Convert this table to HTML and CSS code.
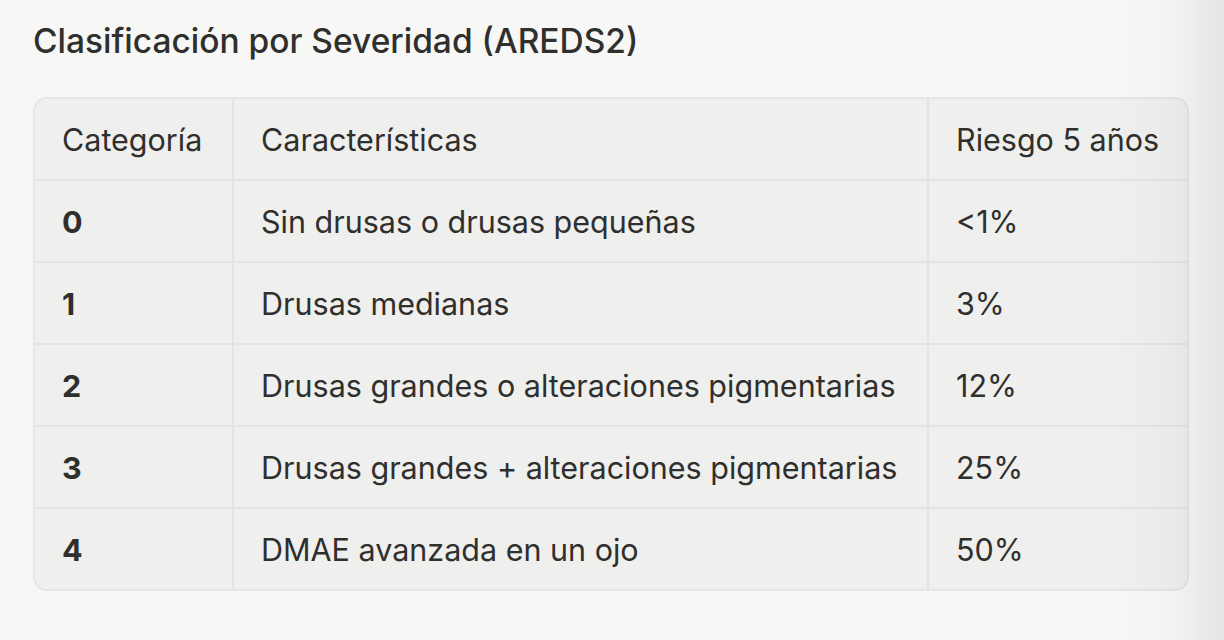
FILE: index.html
```html
<!DOCTYPE html>
<html lang="es">
<head>
<meta charset="utf-8">
<link rel="stylesheet" href="styles.css">
</head>
<body>
<main class="page">
  <h2 class="title">Clasificación por Severidad (AREDS2)</h2>
  <div class="table-wrap">
    <table class="grid">
      <colgroup>
        <col class="c1"><col class="c2"><col class="c3">
      </colgroup>
      <thead>
        <tr><th>Categoría</th><th>Características</th><th>Riesgo 5 años</th></tr>
      </thead>
      <tbody>
        <tr><td class="num">0</td><td>Sin drusas o drusas pequeñas</td><td>&lt;1%</td></tr>
        <tr><td class="num">1</td><td>Drusas medianas</td><td>3%</td></tr>
        <tr><td class="num">2</td><td>Drusas grandes o alteraciones pigmentarias</td><td>12%</td></tr>
        <tr><td class="num">3</td><td>Drusas grandes + alteraciones pigmentarias</td><td>25%</td></tr>
        <tr><td class="num">4</td><td>DMAE avanzada en un ojo</td><td>50%</td></tr>
      </tbody>
    </table>
  </div>
</main>
<div class="edge-shade"></div>
</body>
</html>
```
FILE: styles.css
```css
html, body {
  margin: 0;
  padding: 0;
  background: #f7f7f5;
  height: 100%;
  overflow: hidden;
}
body {
  font-family: Inter, "Noto Sans", sans-serif;
  color: #2f2f2d;
}
.page {
  padding: 20px 35px 0 33px;
}
.title {
  margin: 0;
  font-size: 33.5px;
  font-weight: 500;
  line-height: 42px;
  letter-spacing: 0;
}
.table-wrap {
  box-sizing: border-box;
  margin-top: 35px;
  width: 1156px;
  border: 2px solid #e6e6e4;
  border-radius: 14px;
  overflow: hidden;
  background: #efefee;
}
.grid {
  width: 100%;
  border-collapse: collapse;
  table-layout: fixed;
  font-size: 30.5px;
}
.c1 { width: 198px; }
.c2 { width: 695px; }
.grid th, .grid td {
  text-align: left;
  font-weight: 400;
  height: 80px;
  padding: 0 27px;
  border-right: 2px solid #e3e3e1;
  border-bottom: 2px solid #e3e3e1;
  white-space: nowrap;
  vertical-align: middle;
}
.grid tr > :last-child { border-right: none; }
.grid tbody tr:last-child td { border-bottom: none; }
.grid td.num { font-weight: 700; }
.edge-shade {
  position: fixed;
  top: 0;
  right: 0;
  width: 110px;
  height: 100%;
  background: linear-gradient(to right, rgba(0,0,0,0) 0%, rgba(0,0,0,0.015) 50%, rgba(0,0,0,0.07) 100%);
  pointer-events: none;
}
```
